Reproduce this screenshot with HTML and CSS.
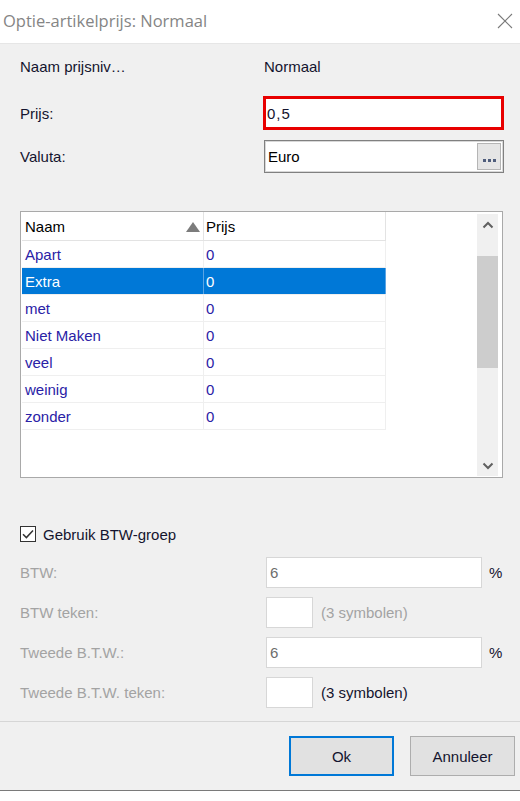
FILE: index.html
```html
<!DOCTYPE html>
<html lang="nl">
<head>
<meta charset="utf-8">
<title>Optie-artikelprijs: Normaal</title>
<link rel="stylesheet" href="styles.css">
</head>
<body>
<div class="window">
  <header class="titlebar">
    <span class="title">Optie-artikelprijs: Normaal</span>
    <svg class="close" width="16" height="16" viewBox="0 0 16 16" aria-label="Sluiten">
      <path d="M1 1L15 15M15 1L1 15" />
    </svg>
  </header>

  <main class="content">
    <div class="field-row row-name">
      <span class="label">Naam prijsniv…</span>
      <span class="value">Normaal</span>
    </div>

    <div class="field-row row-price">
      <span class="label">Prijs:</span>
      <div class="input input-error">0,5</div>
    </div>

    <div class="field-row row-currency">
      <span class="label">Valuta:</span>
      <div class="input input-lookup">
        <span class="lookup-text">Euro</span>
        <span class="lookup-btn"><i></i><i></i><i></i></span>
      </div>
    </div>

    <div class="listview">
      <div class="lv-table">
        <div class="lv-head">
          <div class="lv-cell col-name">Naam<span class="sort-up"></span></div>
          <div class="lv-cell col-price">Prijs</div>
        </div>
        <div class="lv-row"><div class="lv-cell col-name">Apart</div><div class="lv-cell col-price">0</div></div>
        <div class="lv-row selected"><div class="lv-cell col-name">Extra</div><div class="lv-cell col-price">0</div></div>
        <div class="lv-row"><div class="lv-cell col-name">met</div><div class="lv-cell col-price">0</div></div>
        <div class="lv-row"><div class="lv-cell col-name">Niet Maken</div><div class="lv-cell col-price">0</div></div>
        <div class="lv-row"><div class="lv-cell col-name">veel</div><div class="lv-cell col-price">0</div></div>
        <div class="lv-row"><div class="lv-cell col-name">weinig</div><div class="lv-cell col-price">0</div></div>
        <div class="lv-row"><div class="lv-cell col-name">zonder</div><div class="lv-cell col-price">0</div></div>
      </div>
      <div class="scrollbar">
        <div class="sb-btn">
          <svg width="12" height="8" viewBox="0 0 12 8"><path d="M1.5 6.5L6 2L10.5 6.5" /></svg>
        </div>
        <div class="sb-track">
          <div class="sb-thumb"></div>
        </div>
        <div class="sb-btn">
          <svg width="12" height="8" viewBox="0 0 12 8"><path d="M1.5 1.5L6 6L10.5 1.5" /></svg>
        </div>
      </div>
    </div>

    <label class="checkbox-row">
      <span class="checkbox">
        <svg width="14" height="14" viewBox="0 0 14 14"><path d="M2 7.2L5.4 10.6L12 3.4" /></svg>
      </span>
      <span>Gebruik BTW-groep</span>
    </label>

    <div class="field-row vat-row">
      <span class="label disabled">BTW:</span>
      <div class="input input-disabled wide">6</div>
      <span class="unit">%</span>
    </div>

    <div class="field-row vat-row">
      <span class="label disabled">BTW teken:</span>
      <div class="input input-disabled short"></div>
      <span class="hint disabled">(3 symbolen)</span>
    </div>

    <div class="field-row vat-row">
      <span class="label disabled">Tweede B.T.W.:</span>
      <div class="input input-disabled wide">6</div>
      <span class="unit">%</span>
    </div>

    <div class="field-row vat-row">
      <span class="label disabled">Tweede B.T.W. teken:</span>
      <div class="input input-disabled short"></div>
      <span class="hint">(3 symbolen)</span>
    </div>
  </main>

  <footer class="buttons">
    <button class="btn btn-default">Ok</button>
    <button class="btn">Annuleer</button>
  </footer>
</div>
</body>
</html>
```

FILE: styles.css
```css
html, body {
  margin: 0;
  padding: 0;
  background: #ffffff;
}

body {
  width: 520px;
  height: 801px;
  overflow: hidden;
  font-family: "Liberation Sans", Arial, sans-serif;
  font-size: 15px;
  color: #14142e;
}

.window {
  height: 790px;
  display: flex;
  flex-direction: column;
  background: #f0f0f0;
  border-bottom: 1px solid #7a7a7a;
}

/* ---- title bar ---- */
.titlebar {
  height: 43px;
  flex: none;
  background: #ffffff;
  border-bottom: 1px solid #e6e6e6;
  display: flex;
  align-items: center;
  justify-content: space-between;
  padding: 0 7px 0 3px;
}

.title {
  font-family: "Open Sans", "Noto Sans", sans-serif;
  font-size: 16.5px;
  color: #858585;
  margin-top: -2px;
}

.close {
  margin-top: -2px;
}
.close path {
  stroke: #7a7a7a;
  stroke-width: 1.1;
  fill: none;
}

/* ---- form area ---- */
.content {
  flex: 1;
  display: flex;
  flex-direction: column;
  padding: 0 16px 0 20px;
}

.field-row {
  display: flex;
  align-items: center;
}

.label {
  width: 244px;
  flex: none;
}

.label.disabled,
.hint.disabled {
  color: #a3a3a3;
}

.row-name {
  height: 24px;
  margin-top: 10px;
}

.row-price {
  margin-top: 18px;
}

.row-currency {
  margin-top: 10px;
}

.input {
  box-sizing: border-box;
  background: #ffffff;
  display: flex;
  align-items: center;
}

.input-error {
  width: 241px;
  height: 34px;
  margin-left: -1px;
  border: 3px solid #e80000;
  padding-left: 1px;
  letter-spacing: 1px;
}

.input-lookup {
  width: 240px;
  height: 33px;
  border: 1px solid #808080;
  box-shadow: inset 0 0 0 1px #d8d8d8;
  padding-left: 3px;
  justify-content: space-between;
}

.lookup-text {
  color: #000000;
}

.lookup-btn {
  box-sizing: border-box;
  width: 24px;
  height: 27px;
  margin-right: 2px;
  background: #e5e5e5;
  border: 1px solid #b5b5b5;
  display: flex;
  align-items: flex-end;
  justify-content: center;
  gap: 2px;
  padding-bottom: 7px;
}

.lookup-btn i {
  width: 3px;
  height: 3px;
  background: #4f5d7c;
}

/* ---- list view ---- */
.listview {
  box-sizing: border-box;
  margin-top: 38px;
  width: 483px;
  height: 267px;
  background: #ffffff;
  border: 1px solid #a9a9a9;
  padding: 0 4px 1px 1px;
  display: flex;
  justify-content: space-between;
}

.lv-table {
  width: 364px;
  display: flex;
  flex-direction: column;
}

.lv-head,
.lv-row {
  display: grid;
  grid-template-columns: 182px 182px;
}

.lv-head {
  height: 28px;
  border-bottom: 1px solid #e3e3e3;
}

.lv-head .lv-cell {
  color: #000000;
  border-right: 1px solid #e3e3e3;
}

.lv-row {
  height: 26px;
  border-bottom: 1px solid #efefef;
}

.lv-cell {
  display: flex;
  align-items: center;
  padding-left: 3px;
  border-right: 1px solid #efefef;
  color: #2a22a6;
  white-space: nowrap;
  position: relative;
}

.col-price {
  padding-left: 2px;
}

.lv-row.selected {
  background: #0078d7;
}

.lv-row.selected .lv-cell {
  color: #ffffff;
  border-right-color: #5aa4e4;
}

.sort-up {
  position: absolute;
  right: 3px;
  top: 10px;
  width: 0;
  height: 0;
  border-left: 7px solid transparent;
  border-right: 7px solid transparent;
  border-bottom: 10px solid #7c7c7c;
}

.scrollbar {
  width: 21px;
  margin-top: 2px;
  background: #f0f0f0;
  display: flex;
  flex-direction: column;
}

.sb-btn {
  height: 21px;
  display: flex;
  align-items: center;
  justify-content: center;
}

.sb-btn:first-child {
  height: 22px;
}

.sb-btn svg path {
  stroke: #606060;
  stroke-width: 2;
  fill: none;
}

.sb-track {
  flex: 1;
  padding-top: 20px;
}

.sb-thumb {
  height: 112px;
  background: #cdcdcd;
}

/* ---- VAT section ---- */
.checkbox-row {
  margin-top: 47px;
  height: 18px;
  display: flex;
  align-items: center;
  gap: 7px;
  color: #14142e;
}

.checkbox {
  box-sizing: border-box;
  width: 16px;
  height: 16px;
  border: 1px solid #333333;
  background: #ffffff;
  display: flex;
  align-items: center;
  justify-content: center;
}

.checkbox svg path {
  stroke: #333333;
  stroke-width: 1.5;
  fill: none;
}

.vat-row {
  margin-top: 9px;
}

.vat-row:nth-of-type(5) {
  margin-top: 14px;
}

.vat-row .label {
  width: 246px;
}

.input-disabled {
  height: 31px;
  border: 1px solid #d7d7d7;
  padding-left: 3px;
  color: #6d6d6d;
}

.input-disabled.wide {
  width: 216px;
}

.input-disabled.short {
  width: 47px;
}

.unit {
  margin-left: 7px;
  color: #14142e;
}

.hint {
  margin-left: 8px;
  color: #14142e;
}

/* ---- dialog buttons ---- */
.buttons {
  flex: none;
  height: 69px;
  border-top: 1px solid #d6d6d6;
  display: flex;
  justify-content: flex-end;
  align-items: flex-start;
  gap: 16px;
  padding: 14px 5px 0 0;
  box-sizing: border-box;
}

.btn {
  box-sizing: border-box;
  width: 105px;
  height: 40px;
  background: #e1e1e1;
  border: 1px solid #adadad;
  font-family: "Liberation Sans", Arial, sans-serif;
  font-size: 15px;
  color: #14142e;
  padding: 0;
}

.btn-default {
  border: 2px solid #0078d7;
}
```
